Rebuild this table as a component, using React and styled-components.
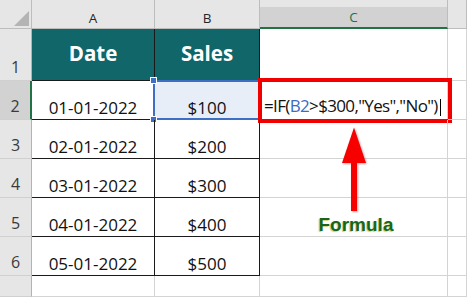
import React from "react";
import styled, { createGlobalStyle, css } from "styled-components";

const Global = createGlobalStyle`
  html, body { margin: 0; padding: 0; background: #ffffff; }
  #root { width: 467px; height: 297px; overflow: hidden; }
`;

const Sheet = styled.div`
  position: relative;
  display: grid;
  grid-template-columns: 32px 123px 105px 188px 19px;
  grid-template-rows: 29px 52px 39px 39px 39px 39px 39px 21px;
  width: 467px;
  height: 297px;
  overflow: hidden;
  background: #ffffff;
  font-family: "Open Sans", "Liberation Sans", sans-serif;
`;

const Corner = styled.div`
  position: relative;
  box-sizing: border-box;
  background: #e6e6e6;
  border-right: 1px solid #bdbdbd;
  border-bottom: 1px solid #bdbdbd;
  &::after {
    content: "";
    position: absolute;
    left: 14px;
    top: 11px;
    width: 0;
    height: 0;
    border-left: 15px solid transparent;
    border-bottom: 15px solid #b4b4b4;
  }
`;

const ColHeader = styled.div`
  box-sizing: border-box;
  display: flex;
  align-items: center;
  justify-content: center;
  padding-top: 7px;
  font-size: 13.5px;
  color: #262626;
  background: #e6e6e6;
  border-right: 1px solid #bdbdbd;
  border-bottom: 1px solid #bdbdbd;
  ${(p) =>
    p.$active &&
    css`
      background: linear-gradient(#e6e6e6 0 7px, #d2d2d2 7px);
      border-bottom: 2px solid #217346;
      color: #217346;
    `}
`;

const RowHeader = styled.div`
  box-sizing: border-box;
  display: flex;
  align-items: flex-end;
  justify-content: center;
  padding-bottom: 2px;
  font-size: 16px;
  color: #3a3a3a;
  background: #e6e6e6;
  border-right: 1px solid #b4b4b4;
  border-bottom: 1px solid #d0d0d0;
  ${(p) =>
    p.$active &&
    css`
      background: #d2d2d2;
      border-right: 2px solid #217346;
    `}
`;

const kinds = {
  title: css`
    background: #11666a;
    color: #ffffff;
    font-weight: 700;
    font-size: 20.5px;
    align-items: center;
    border-right: 1px solid #1a1a1a;
    border-bottom: 1px solid #1a1a1a;
  `,
  data: css`
    color: #111111;
    font-size: 17px;
    border-right: 1px solid #1a1a1a;
    border-bottom: 1px solid #1a1a1a;
  `,
  grid: css`
    border-right: 1px solid #d4d4d4;
    border-bottom: 1px solid #d4d4d4;
  `,
};

const Cell = styled.div`
  position: relative;
  box-sizing: border-box;
  display: flex;
  align-items: flex-end;
  justify-content: center;
  padding-bottom: 3px;
  line-height: 17px;
  white-space: nowrap;
  ${(p) => kinds[p.$kind || "grid"]}
  ${(p) =>
    p.$selected &&
    css`
      background: #e8eef8;
    `}
  ${(p) =>
    p.$start &&
    css`
      justify-content: flex-start;
      padding-left: 4px;
    `}
`;

const SelectionFrame = styled.div`
  position: absolute;
  left: -2px;
  top: -1px;
  right: 0;
  bottom: -1px;
  border: 2px solid #3f6fc4;
  border-right: none;
  pointer-events: none;
`;

const Handle = styled.div`
  position: absolute;
  left: -5px;
  top: ${(p) => (p.$bottom ? "35px" : "-4px")};
  width: 5px;
  height: 5px;
  background: #3f6fc4;
  border: 1px solid #ffffff;
`;

const RedBox = styled.div`
  position: absolute;
  left: -2px;
  top: -3px;
  width: 194px;
  height: 45px;
  box-sizing: border-box;
  border: 4px solid #f20000;
  pointer-events: none;
`;

const Formula = styled.span`
  position: relative;
  font-size: 17px;
  letter-spacing: -0.65px;
  color: #111111;
  z-index: 1;
`;

const Ref = styled.span`
  color: #3b6cc2;
`;

const Caret = styled.span`
  display: inline-block;
  width: 1px;
  height: 17px;
  margin-left: 2px;
  background: #000000;
  vertical-align: -4px;
`;

const Note = styled.span`
  font-family: "Liberation Sans", Arial, sans-serif;
  font-weight: 700;
  font-size: 19px;
  line-height: 19px;
  color: #18661a;
  text-shadow: -1px 1px 1px rgba(200, 190, 70, 0.75);
  margin-bottom: -1px;
  margin-left: 5px;
`;

const ArrowSvg = styled.svg`
  position: absolute;
  left: 336px;
  top: 124px;
  overflow: visible;
  filter: drop-shadow(1px 1px 1px rgba(80, 0, 0, 0.35));
`;

function Arrow() {
  return (
    <ArrowSvg width="36" height="92" viewBox="0 0 36 92">
      <polygon points="18,3.5 6,39 30,39" fill="#f70000" />
      <rect x="15" y="36" width="6" height="51" fill="#f70000" />
    </ArrowSvg>
  );
}

const rows = [
  ["01-01-2022", "$100"],
  ["02-01-2022", "$200"],
  ["03-01-2022", "$300"],
  ["04-01-2022", "$400"],
  ["05-01-2022", "$500"],
];

export default function App() {
  return (
    <>
      <Global />
      <Sheet>
        <Corner />
        <ColHeader>A</ColHeader>
        <ColHeader>B</ColHeader>
        <ColHeader $active>C</ColHeader>
        <ColHeader />

        <RowHeader>1</RowHeader>
        <Cell $kind="title">Date</Cell>
        <Cell $kind="title">Sales</Cell>
        <Cell />
        <Cell />

        {rows.map(([date, sales], i) => {
          const n = i + 2;
          const first = i === 0;
          return (
            <React.Fragment key={n}>
              <RowHeader $active={first}>{n}</RowHeader>
              <Cell $kind="data">{date}</Cell>
              <Cell $kind="data" $selected={first}>
                {sales}
                {first && (
                  <>
                    <SelectionFrame />
                    <Handle />
                    <Handle $bottom />
                  </>
                )}
              </Cell>
              <Cell $start={first}>
                {first && (
                  <>
                    <RedBox />
                    <Formula>
                      =IF(<Ref>B2</Ref>&gt;$300,"Yes","No")
                      <Caret />
                    </Formula>
                  </>
                )}
                {n === 5 && <Note>Formula</Note>}
              </Cell>
              <Cell />
            </React.Fragment>
          );
        })}

        <RowHeader />
        <Cell />
        <Cell />
        <Cell />
        <Cell />

        <Arrow />
      </Sheet>
    </>
  );
}
